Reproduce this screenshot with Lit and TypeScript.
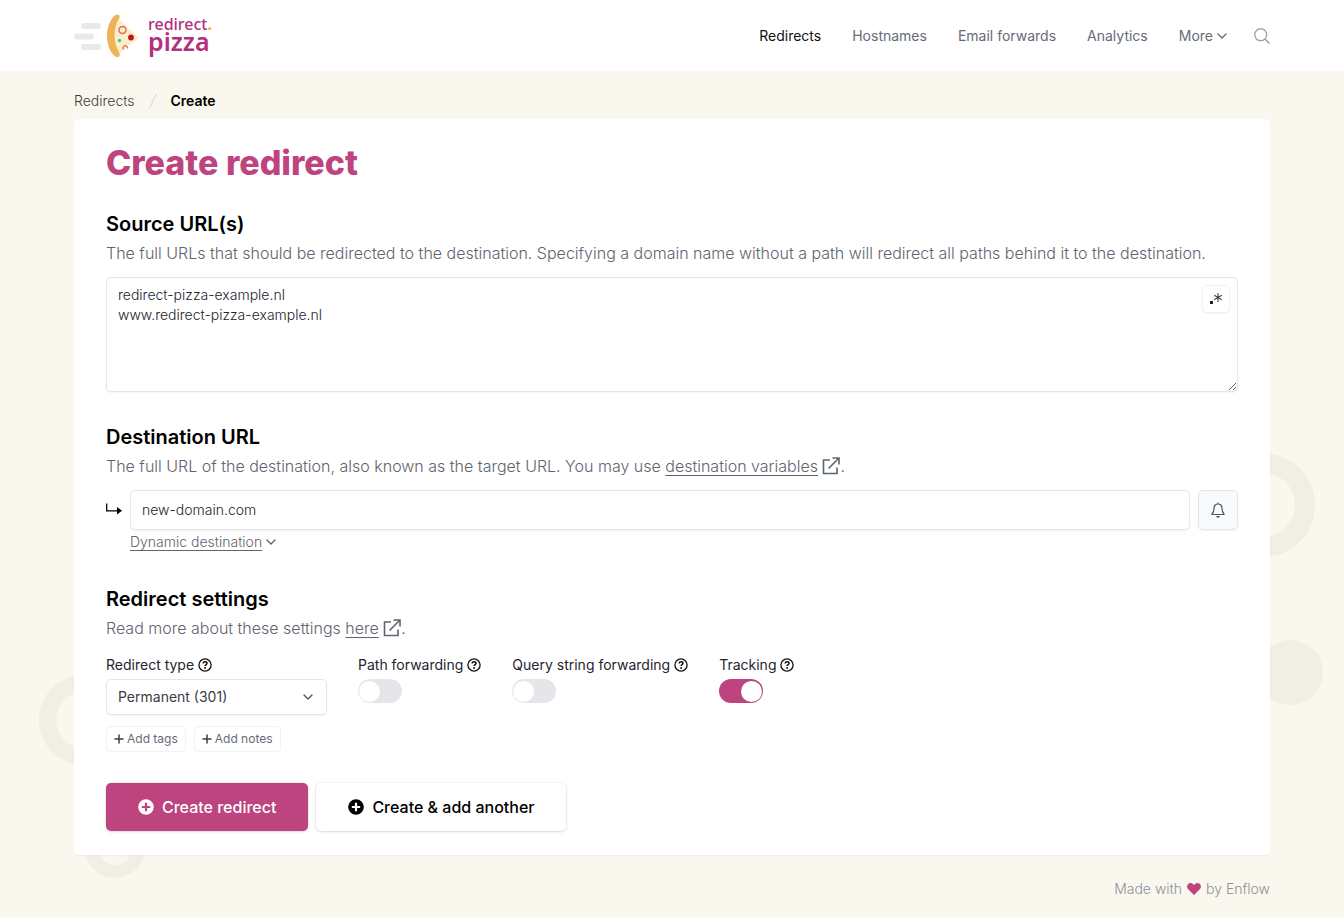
import { LitElement, html, css, svg } from "lit";
import { customElement, property, state } from "lit/decorators.js";

const externalIcon = html`<svg class="external" viewBox="0 0 18 18" aria-hidden="true">
  <path d="M8 3H1.500v13.500H15V10.500M10.500 1H17v6.500M16.500 1.500L6.500 11.500" fill="none" stroke="currentColor" stroke-width="1.600" />
</svg>`;

const chevron = html`<svg class="chevron" viewBox="0 0 10 6" aria-hidden="true">
  <path d="M1 1l4 4 4-4" fill="none" stroke="currentColor" stroke-width="1.400" stroke-linecap="round" stroke-linejoin="round" />
</svg>`;

const plusCircle = html`<svg class="plus-circle" viewBox="0 0 16 16" aria-hidden="true">
  <path fill="currentColor" fill-rule="evenodd" d="M8 .2a7.800 7.800 0 1 0 0 15.600A7.800 7.800 0 0 0 8 .2zM6.900 3.800h2.200v3.100h3.100v2.200H9.100v3.100H6.900V9.100H3.800V6.900h3.100z" />
</svg>`;

const plus = html`<svg class="plus" viewBox="0 0 10 10" aria-hidden="true">
  <path d="M5 .5v9M.5 5h9" stroke="currentColor" stroke-width="1.500" />
</svg>`;

const help = html`<svg class="help" viewBox="0 0 14 14" aria-hidden="true">
  <circle cx="7" cy="7" r="6.100" fill="none" stroke="currentColor" stroke-width="1.300" />
  <path d="M5.100 5.500c.1-1 .9-1.700 2-1.700s1.900.6 1.900 1.500c0 1.300-1.900 1.300-1.900 2.700" fill="none" stroke="currentColor" stroke-width="1.500" />
  <circle cx="7.100" cy="10" r=".95" fill="currentColor" />
</svg>`;

@customElement("rp-logo")
class RpLogo extends LitElement {
  static styles = css`
    :host { display: block; }
    .logo {
      display: flex;
      align-items: center;
      gap: 9px;
      text-decoration: none;
      font-family: "Noto Sans", "Open Sans", sans-serif;
      color: #b3307c;
    }
    .mark { width: 65px; height: 44px; }
    .words { display: flex; flex-direction: column; padding-bottom: 6px; }
    .small { font-size: 16px; line-height: 16px; font-weight: 500; }
    .dot { color: #f0b250; font-weight: 800; }
    .large { font-size: 25px; line-height: 18px; font-weight: 600; }
  `;
  render() {
    return html`<a class="logo" href="#" aria-label="redirect.pizza">
      <svg class="mark" viewBox="0 0 65 44" aria-hidden="true">
        ${svg`
        <g fill="#e9e9e9">
          <rect x="7" y="9" width="20" height="6" rx="3" />
          <rect x="0" y="19.500" width="20" height="6" rx="3" />
          <rect x="7" y="30" width="20" height="6" rx="3" />
        </g>
        <path d="M44 4L65 24 44 40C38 30 38 15 44 4z" fill="#fbeecb" />
        <path d="M43 .5c2-.6 3.500 1.700 2.300 3.600-6.300 9.600-6.300 24.500 0 34.600C46.800 41 45 43.800 43 43.300 37 41 33 31.500 33 22S37 2.500 43 .5z" fill="#eeb357" />
        <circle cx="48.500" cy="16" r="3.500" fill="none" stroke="#e76a4e" stroke-width="1.500" />
        <circle cx="57" cy="23.500" r="2.900" fill="#bd1622" />
        <circle cx="45.500" cy="26.500" r="1.700" fill="#57bd7e" />
        <path d="M49.500 35.500a2.300 2.300 0 1 1 4-1" fill="none" stroke="#e76a4e" stroke-width="1.300" />`}
      </svg>
      <span class="words">
        <span class="small">redirect<span class="dot">.</span></span>
        <span class="large">pizza</span>
      </span>
    </a>`;
  }
}

@customElement("rp-toggle")
class RpToggle extends LitElement {
  @property() label = "";
  @property({ type: Boolean }) on = false;
  static styles = css`
    :host { display: block; }
    .field { display: flex; flex-direction: column; gap: 4px; align-items: flex-start; }
    .label { display: flex; align-items: center; gap: 4px; font-size: 14px; line-height: 20px; color: #1f2430; white-space: nowrap; }
    .help { width: 14px; height: 14px; color: #111; }
    .switch {
      appearance: none;
      margin: 0;
      width: 44px;
      height: 24px;
      border-radius: 12px;
      background: #e4e6ea;
      padding: 1px;
      display: flex;
      align-items: center;
      cursor: pointer;
    }
    .switch::before { content: ""; width: 21px; height: 21px; border-radius: 50%; background: #fff; }
    .switch:checked { background: #bd447f; justify-content: flex-end; }
  `;
  render() {
    return html`<div class="field">
      <label class="label" for="switch">${this.label} ${help}</label>
      <input id="switch" class="switch" type="checkbox" role="switch" .checked=${this.on} />
    </div>`;
  }
}

@customElement("app-root")
class AppRoot extends LitElement {
  @state() private nav = ["Redirects", "Hostnames", "Email forwards", "Analytics"];

  static styles = css`
    :host { display: block; font-family: Inter, "Liberation Sans", sans-serif; color: #000; }
    * { box-sizing: border-box; }
    button, input, textarea, select { font-family: inherit; }
    h1, h2, p { margin: 0; }
    .page { min-height: 100vh; background: #faf7ee; overflow: hidden; }
    .header { background: #fff; }
    .wrap { max-width: 1196px; margin: 0 auto; }
    .bar { display: flex; justify-content: space-between; align-items: center; height: 71px; }
    .nav { display: flex; align-items: center; gap: 31px; }
    .nav-link, .more { font-size: 14px; line-height: 20px; color: #666b76; text-decoration: none; }
    .nav-link.active { color: #111; }
    .more { display: flex; align-items: center; gap: 4px; background: none; border: 0; padding: 0; }
    .chevron { width: 10px; height: 6px; }
    .search { display: flex; padding: 0; border: 0; background: none; margin-left: -4px; color: #9a9ea7; }
    .search-icon { width: 16px; height: 16px; }
    .crumbs { display: flex; align-items: center; gap: 14px; padding: 20px 0 8px; font-size: 14px; line-height: 20px; }
    .crumb { color: #3a3d44; text-decoration: none; font-weight: 300; }
    .current { font-weight: 600; }
    .slash { width: 8px; height: 16px; color: #d5d6da; }
    .stage { position: relative; }
    .deco { position: absolute; border-radius: 50%; }
    .ring { border: solid #f1eee6; }
    .ring-right { width: 104px; height: 104px; border-width: 20px; right: -45px; top: 334px; }
    .disc { width: 65px; height: 65px; background: #f1eee6; right: -53px; top: 521px; }
    .ring-left { width: 90px; height: 90px; border-width: 17px; left: -35px; top: 556px; }
    .ring-bottom { width: 60px; height: 60px; border-width: 13px; left: 11px; bottom: -23px; }
    .card { position: relative; background: #fff; border-radius: 4px; padding: 24px 32px; box-shadow: 0 1px 2px #0000000a; }
    .title { font-size: 34px; line-height: 40px; font-weight: 800; color: #bd447f; }
    .section { margin-top: 31px; }
    .section.first { margin-top: 27px; }
    .heading { font-size: 20px; line-height: 28px; font-weight: 600; }
    .lead { margin-top: 3px; font-size: 16px; line-height: 24px; font-weight: 300; color: #5f646f; }
    .link { color: inherit; text-decoration: underline; text-underline-offset: 3px; }
    .external { width: 18px; height: 18px; vertical-align: -3px; }
    .box { border: 1px solid #e3e5e9; border-radius: 5px; background: #fff; box-shadow: 0 1px 2px #0000000d; color: #22252c; font-size: 14px; line-height: 20px; font-weight: 300; }
    .source { position: relative; margin-top: 12px; }
    .urls { display: block; width: 100%; height: 115px; padding: 7px 11px; resize: vertical; }
    .regex { position: absolute; top: 8px; right: 8px; width: 28px; height: 28px; padding: 0; display: grid; place-items: center; border-color: #eff0f2; }
    .regex-icon { width: 14px; height: 14px; }
    .dest { display: flex; align-items: center; gap: 8px; margin-top: 12px; }
    .arrow { width: 16px; height: 16px; flex: none; }
    .url { flex: 1; min-width: 0; height: 40px; padding: 0 11px 2px; }
    .bell { width: 40px; height: 40px; padding: 0; background: #f8fafc; display: grid; place-items: center; }
    .bell-icon { width: 16px; height: 16px; color: #50545e; }
    .dynamic { display: flex; align-items: center; gap: 4px; margin: 2px 0 0 24px; padding: 0 0 2px; border: 0; background: none; font-size: 14px; line-height: 20px; font-weight: 300; color: #5f646f; }
    .settings { display: flex; flex-wrap: wrap; gap: 31px; margin-top: 15px; }
    .field { display: flex; flex-direction: column; gap: 4px; width: 221px; }
    .label { display: flex; align-items: center; gap: 4px; font-size: 14px; line-height: 20px; color: #1f2430; }
    .help { width: 14px; height: 14px; color: #111; }
    .picker { display: grid; align-items: center; }
    .select { grid-area: 1 / 1; appearance: none; height: 36px; padding: 0 11px; font-weight: 400; color: #3a3d44; }
    .picker .chevron { grid-area: 1 / 1; justify-self: end; margin-right: 14px; pointer-events: none; z-index: 1; color: #50545e; }
    .extras { display: flex; gap: 8px; margin-top: 11px; }
    .extra { display: flex; align-items: center; gap: 3px; height: 26px; padding: 0 7px; border: 1px solid #f1f2f4; border-radius: 4px; background: #fff; font-size: 12px; line-height: 16px; color: #666b76; }
    .plus { width: 10px; height: 10px; color: #3a3d44; }
    .actions { display: flex; flex-wrap: wrap; gap: 8px; margin-top: 31px; }
    .action { display: flex; align-items: center; gap: 8px; height: 48px; padding: 0 32px; border-radius: 5px; font-size: 16px; line-height: 24px; font-weight: 500; border: 0; background: #fff; color: #000; box-shadow: 0 0 0 1px #00000008, 0 1px 3px #0000001f; }
    .action.primary { background: #bd447f; color: #fff; }
    .plus-circle { width: 16px; height: 16px; }
    .footer { display: flex; justify-content: flex-end; align-items: center; gap: 5px; padding: 24px 0 18px; font-size: 14px; line-height: 20px; font-weight: 300; color: #8d919b; }
    .heart { width: 14px; height: 12px; color: #bd447f; }
    .maker { color: inherit; text-decoration: none; }
  `;

  render() {
    return html`<div class="page">
      <header class="header">
        <div class="wrap bar">
          <rp-logo></rp-logo>
          <nav class="nav">
            ${this.nav.map((n, i) => html`<a class="nav-link ${i === 0 ? "active" : ""}" href="#">${n}</a>`)}
            <button class="more" type="button">More ${chevron}</button>
            <button class="search" type="button" aria-label="Search">
              <svg class="search-icon" viewBox="0 0 16 16" aria-hidden="true">
                <path d="M11.200 11.200L15.500 15.500" stroke="currentColor" stroke-width="1.500" />
                <circle cx="6.700" cy="6.700" r="6" fill="none" stroke="currentColor" stroke-width="1.300" />
              </svg>
            </button>
          </nav>
        </div>
      </header>
      <div class="wrap">
        <nav class="crumbs" aria-label="Breadcrumb">
          <a class="crumb" href="#">Redirects</a>
          <svg class="slash" viewBox="0 0 8 16" aria-hidden="true"><path d="M7.500.5l-7 15" stroke="currentColor" /></svg>
          <span class="current">Create</span>
        </nav>
        <main class="stage">
          <div class="deco ring ring-right"></div>
          <div class="deco disc"></div>
          <div class="deco ring ring-left"></div>
          <div class="deco ring ring-bottom"></div>
          <form class="card" @submit=${(e: Event) => e.preventDefault()}>
            <h1 class="title">Create redirect</h1>

            <section class="section first">
              <h2 class="heading" id="source-h">Source URL(s)</h2>
              <p class="lead">The full URLs that should be redirected to the destination. Specifying a domain name without a path will redirect all paths behind it to the destination.</p>
              <div class="source">
                <textarea class="box urls" aria-labelledby="source-h" spellcheck="false" .value=${"redirect-pizza-example.nl\nwww.redirect-pizza-example.nl"}></textarea>
                <button class="box regex" type="button" aria-label="Regular expression">
                  <svg class="regex-icon" viewBox="0 0 14 14" aria-hidden="true">
                    <rect x="1" y="9" width="3" height="3" fill="#222" />
                    <path d="M9 1v9M5.200 3.200l7.600 4.600M12.800 3.200L5.200 7.800" stroke="#3f4550" stroke-width="1.100" />
                  </svg>
                </button>
              </div>
            </section>

            <section class="section">
              <h2 class="heading" id="dest-h">Destination URL</h2>
              <p class="lead">The full URL of the destination, also known as the target URL. You may use <a class="link" href="#">destination variables</a> ${externalIcon}.</p>
              <div class="dest">
                <svg class="arrow" viewBox="0 0 16 16" aria-hidden="true">
                  <path d="M.7 1.500v7.300H12" fill="none" stroke="#000" stroke-width="1.300" />
                  <path d="M11 5l5 3.800-5 3.800z" fill="#000" />
                </svg>
                <input class="box url" type="text" aria-labelledby="dest-h" .value=${"new-domain.com"} />
                <button class="box bell" type="button" aria-label="Notifications">
                  <svg class="bell-icon" viewBox="0 0 16 16" aria-hidden="true">
                    <path d="M8 .5v1.500M8 2C5.400 2 4 3.900 4 6.200c0 3.300-.7 4.400-2 5.800v.5h12V12c-1.300-1.400-2-2.500-2-5.800C12 3.900 10.600 2 8 2z" fill="none" stroke="currentColor" stroke-width="1.200" stroke-linejoin="round" />
                    <path d="M6.200 13.900h3.600a1.800 1.800 0 0 1-3.600 0z" fill="currentColor" />
                  </svg>
                </button>
              </div>
              <button class="dynamic" type="button"><span class="link">Dynamic destination</span> ${chevron}</button>
            </section>

            <section class="section">
              <h2 class="heading">Redirect settings</h2>
              <p class="lead">Read more about these settings <a class="link" href="#">here</a> ${externalIcon}.</p>
              <div class="settings">
                <div class="field">
                  <label class="label" for="type">Redirect type ${help}</label>
                  <div class="picker">
                    <select class="box select" id="type"><option>Permanent (301)</option><option>Temporary (302)</option></select>
                    ${chevron}
                  </div>
                </div>
                <rp-toggle label="Path forwarding"></rp-toggle>
                <rp-toggle label="Query string forwarding"></rp-toggle>
                <rp-toggle label="Tracking" on></rp-toggle>
              </div>
              <div class="extras">
                <button class="extra" type="button">${plus} Add tags</button>
                <button class="extra" type="button">${plus} Add notes</button>
              </div>
            </section>

            <div class="actions">
              <button class="action primary" type="submit">${plusCircle} Create redirect</button>
              <button class="action" type="button">${plusCircle} Create &amp; add another</button>
            </div>
          </form>
        </main>
        <footer class="footer">
          <span>Made with</span>
          <svg class="heart" viewBox="0 0 14 12" aria-label="love"><path fill="currentColor" d="M7 12L1.200 6.300C-.3 4.800-.3 2.500 1 1.200 2.500-.3 4.700-.2 6.200 1.200L7 2l.8-.8c1.500-1.400 3.700-1.500 5.200 0 1.300 1.300 1.300 3.600-.2 5.100z" /></svg>
          <a class="maker" href="#">by Enflow</a>
        </footer>
      </div>
    </div>`;
  }
}
